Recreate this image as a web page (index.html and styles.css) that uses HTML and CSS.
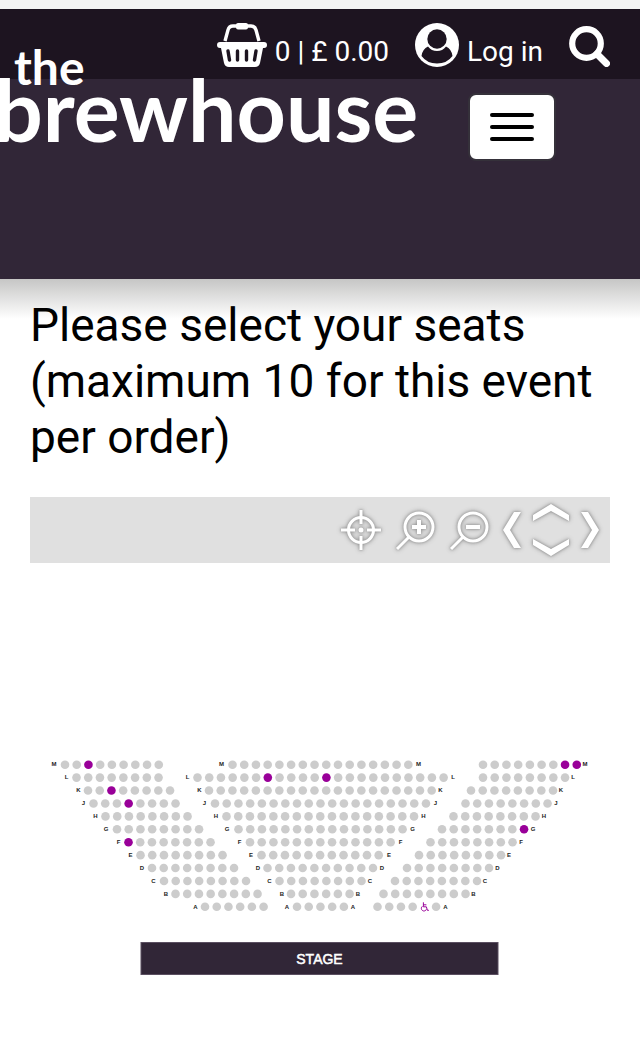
FILE: index.html
```html
<!DOCTYPE html>
<html lang="en">
<head>
<meta charset="utf-8">
<meta name="viewport" content="width=device-width, initial-scale=1">
<title>the brewhouse</title>
<link rel="stylesheet" href="styles.css">
</head>
<body>
<header class="header">
  <nav class="topbar" aria-label="Account">
    <a class="topbar-link" href="#basket">
      <svg class="icon-basket" viewBox="0 0 50 44" aria-hidden="true">
        <path d="M8 18 11 7Q12 3 16 3H34Q38 3 39 7L42 18" fill="none" stroke="#fff" stroke-width="3.4"/>
        <rect x="19" y="0" width="12" height="6.5" rx="2" fill="#fff"/>
        <path fill="#fff" d="M3 19H47A3 3 0 0 1 47 25H46L43 40Q42 44 38 44H12Q8 44 7 40L4 25H3A3 3 0 0 1 3 19Z"/>
        <path d="M11 28 12.500 37M20.500 28V37M29.500 28V37M39 28 37.500 37" stroke="#1d1420" stroke-width="3.4" stroke-linecap="round"/>
      </svg>
      <span>0 | £ 0.00</span>
    </a>
    <a class="topbar-link" href="#login">
      <svg class="icon-user" viewBox="0 0 44 44" aria-hidden="true">
        <circle cx="22" cy="22" r="22" fill="#fff"/>
        <circle cx="22" cy="16" r="9.700" fill="#1d1420"/>
        <path fill="#1d1420" d="M13 23.500Q16.500 28 22 28T31 23.500Q36.500 26 37.500 33 32 40.500 22 40.500T6.500 33Q7.500 26 13 23.500Z"/>
      </svg>
      <span>Log in</span>
    </a>
    <a class="topbar-link" href="#search" aria-label="Search">
      <svg class="icon-search" viewBox="0 0 41 41" aria-hidden="true">
        <circle cx="17.500" cy="17.500" r="14.300" fill="none" stroke="#fff" stroke-width="6.200"/>
        <path d="M28 28 37.500 37.500" stroke="#fff" stroke-width="7" stroke-linecap="round"/>
      </svg>
    </a>
  </nav>
  <div class="masthead">
    <a class="logo" href="#home"><span class="logo-the">the</span><span class="logo-name">brewhouse</span></a>
    <button class="menu" type="button" aria-label="Menu"><span class="menu-bar"></span><span class="menu-bar"></span><span class="menu-bar"></span></button>
  </div>
</header>
<main class="content">
  <h1 class="title">Please select your seats (maximum 10 for this event per order)</h1>
  <div class="toolbar" role="toolbar" aria-label="Seat map view">
    <button class="tool" type="button" aria-label="Centre">
      <svg width="48" height="50" viewBox="0 0 48 50"><g class="glyph"><circle cx="24" cy="25" r="12.500"/><path d="M24 5V19M24 31V45M4 25H18M30 25H44"/></g><circle cx="24" cy="25" r="2.500" fill="#fff"/></svg>
    </button>
    <button class="tool" type="button" aria-label="Zoom in">
      <svg width="48" height="50" viewBox="0 0 48 50"><g class="glyph"><circle cx="28" cy="22" r="14"/><path d="M18 32 6 44"/><path class="sign" d="M28 15V29M21 22H35"/></g></svg>
    </button>
    <button class="tool" type="button" aria-label="Zoom out">
      <svg width="48" height="50" viewBox="0 0 48 50"><g class="glyph"><circle cx="28" cy="22" r="14"/><path d="M18 32 6 44"/><path class="sign" d="M21 22H35"/></g></svg>
    </button>
    <button class="tool" type="button" aria-label="Move left">
      <svg width="24" height="50" viewBox="0 0 24 50"><path class="arrow" d="M15 7H22L11 25 22 43H15L4 25Z"/></svg>
    </button>
    <span class="tool-stack">
      <button class="tool" type="button" aria-label="Move up">
        <svg width="44" height="30" viewBox="0 0 44 30"><path class="arrow" d="M4 15 22 4 40 15V21L22 11 4 21Z"/></svg>
      </button>
      <button class="tool" type="button" aria-label="Move down">
        <svg width="44" height="30" viewBox="0 0 44 30"><path class="arrow" d="M4 9 22 19 40 9V15L22 26 4 15Z"/></svg>
      </button>
    </span>
    <button class="tool" type="button" aria-label="Move right">
      <svg width="24" height="50" viewBox="0 0 24 50"><path class="arrow" d="M9 7H2L13 25 2 43H9L20 25Z"/></svg>
    </button>
  </div>
  <svg class="plan" id="plan" viewBox="30 563 580 460" role="img" aria-label="Seating plan">
    <rect class="stage" x="141" y="942.500" width="357" height="32"/>
    <text class="stage-label" x="319.500" y="964">STAGE</text>
  </svg>
</main>
<script src="plan.js"></script>
</body>
</html>
```
FILE: styles.css
```css
* {
  box-sizing: border-box;
}

body {
  margin: 0;
  background: #fff;
  color: #000;
  font-family: Roboto, "Liberation Sans", sans-serif;
}

.header {
  border-top: 9px solid #f3f3f3;
  background: #312637;
}

.topbar {
  display: flex;
  justify-content: flex-end;
  align-items: flex-end;
  gap: 26px;
  padding: 14px 30px 12px;
  background: #1d1420;
}

.topbar-link {
  display: flex;
  align-items: flex-end;
  gap: 8px;
  color: #fff;
  font-size: 28px;
  line-height: 30px;
  text-decoration: none;
  white-space: nowrap;
}

.icon-basket {
  width: 50px;
  height: 44px;
}

.icon-user {
  width: 44px;
  height: 44px;
}

.icon-search {
  width: 41px;
  height: 41px;
}

.masthead {
  display: flex;
  align-items: flex-start;
  gap: 50px;
  min-height: 200px;
}

.logo {
  display: flex;
  flex-direction: column;
  margin: -36px 0 0 -6px;
  color: #fff;
  font-family: Lato, "Open Sans", sans-serif;
  font-weight: 700;
  text-decoration: none;
}

.logo-the {
  padding-left: 20px;
  font-size: 48px;
  line-height: 48px;
}

.logo-name {
  font-size: 86px;
  line-height: 36px;
}

.menu {
  display: flex;
  flex-direction: column;
  justify-content: center;
  gap: 8px;
  width: 88px;
  height: 68px;
  margin-top: 14px;
  padding: 0 20px;
  border: 2px solid #35313a;
  border-radius: 8px;
  background: #fff;
}

.menu-bar {
  height: 4px;
  border-radius: 2px;
  background: #000;
}

.content {
  padding: 18px 30px 23px;
  background: linear-gradient(#c6c6c5, #fff 40px);
}

.title {
  margin: 0 0 32px;
  font-size: 46px;
  line-height: 56px;
  font-weight: 400;
}

.toolbar {
  display: flex;
  justify-content: flex-end;
  align-items: center;
  gap: 6px;
  min-height: 66px;
  padding-right: 7px;
  background: #e0e0e0;
}

.tool {
  display: block;
  padding: 0;
  border: 0;
  background: none;
}

.tool svg {
  display: block;
  filter: drop-shadow(0 0 1px #999) drop-shadow(0 0 2px #999);
}

.tool-stack {
  display: flex;
  flex-direction: column;
}

.glyph {
  fill: none;
  stroke: #fff;
  stroke-width: 3;
}

.sign {
  stroke-width: 4;
}

.arrow {
  fill: #fff;
}

.plan {
  display: block;
  width: 100%;
}

.seat {
  fill: #ccc;
}

.seat-free {
  fill: #909;
}

.wheelchair {
  fill: none;
  stroke: #909;
}

.row-label {
  fill: #222;
  font: 700 6px "Liberation Sans", Arial, sans-serif;
  text-anchor: middle;
}

.stage {
  fill: #312637;
  stroke: #5b4f61;
}

.stage-label {
  fill: #fff;
  font: 14px "Liberation Sans", Arial, sans-serif;
  text-anchor: middle;
  stroke: #fff;
  stroke-width: 0.5px;
}
```
FILE: plan.js
```js
const NS = 'http://www.w3.org/2000/svg';
const plan = document.getElementById('plan');
const PITCH = 11.72;
const ROW = 12.92;

// Each block: [first seat x, seat count, left label x, right label x, free seats]
const rows = {
  M: [[65, 9, 54, 0, [2]], [232.5, 16, 221.5, 418.5, []], [483, 9, 0, 585, [7, 8]]],
  L: [[76.5, 8, 66.5, 0, []], [197.5, 22, 187.5, 453, [6, 11]], [483, 8, 0, 573, []]],
  K: [[88, 8, 78.5, 0, [2]], [209, 20, 199.5, 440.5, []], [471, 8, 0, 561, []]],
  J: [[93.5, 8, 83.5, 0, [3]], [215, 19, 204.5, 435.5, []], [465.5, 8, 0, 556, []]],
  H: [[105.5, 8, 95.5, 0, []], [226.5, 17, 216, 423.5, []], [453.5, 8, 0, 544, []]],
  G: [[117, 8, 106, 0, []], [238.5, 15, 227, 412.5, []], [442, 8, 0, 533, [7]]],
  F: [[128.5, 8, 118.5, 0, [0]], [250, 13, 239.5, 400.5, []], [430.5, 8, 0, 521, []]],
  E: [[140.5, 8, 130.5, 0, []], [261.5, 11, 251, 389, []], [419, 8, 0, 509, []]],
  D: [[152, 8, 142, 0, []], [267.5, 10, 258, 382, []], [407, 8, 0, 497.5, []]],
  C: [[164, 8, 153.5, 0, []], [279.5, 8, 269.5, 370, []], [395, 8, 0, 485, []]],
  B: [[175.5, 8, 166, 0, []], [291, 6, 282, 358, []], [383.5, 8, 0, 473.5, []]],
  A: [[205, 6, 195.5, 0, []], [297, 5, 287, 353, []], [377.5, 6, 0, 445.5, []]]
};

function add(tag, attrs, text) {
  const el = document.createElementNS(NS, tag);
  for (const key in attrs) el.setAttribute(key, attrs[key]);
  if (text) el.textContent = text;
  plan.appendChild(el);
}

Object.entries(rows).forEach(([name, blocks], r) => {
  const y = 764.7 + r * ROW;
  blocks.forEach(([start, count, left, right, free], b) => {
    for (let i = 0; i < count; i++) {
      const x = start + i * PITCH;
      if (name === 'A' && b === 2 && i === 4) {
        add('path', {
          class: 'wheelchair',
          d: `M${x - 1} ${y - 4.5}V${y}H${x + 2}L${x + 3} ${y + 3.5}H${x + 4.5}M${x - 1} ${y - 2}H${x + 2}M${x - 2} ${y - 0.5}A2.6 2.6 0 1 0 ${x + 2} ${y + 2.5}`
        });
      } else {
        add('circle', { class: free.includes(i) ? 'seat seat-free' : 'seat', cx: x, cy: y, r: 4.3 });
      }
    }
    if (left) add('text', { class: 'row-label', x: left, y: y + 1.7 }, name);
    if (right) add('text', { class: 'row-label', x: right, y: y + 1.7 }, name);
  });
});
```
